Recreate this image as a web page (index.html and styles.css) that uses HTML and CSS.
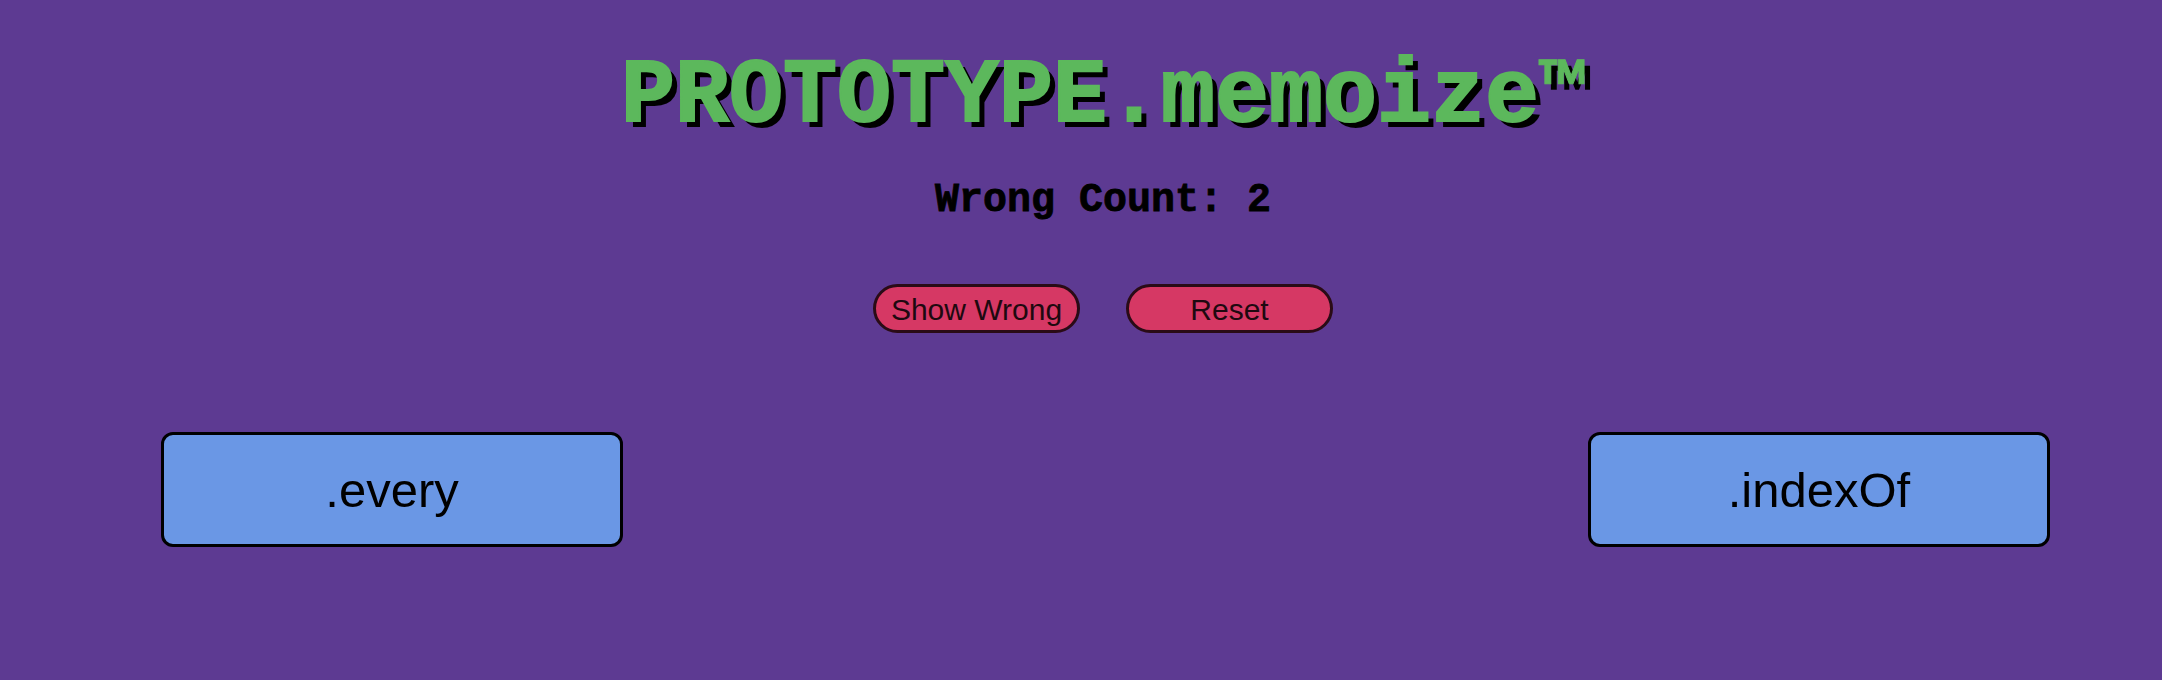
FILE: index.html
```html
<!DOCTYPE html>
<html lang="en">
<head>
<meta charset="utf-8">
<title>PROTOTYPE.memoize</title>
<link rel="stylesheet" href="styles.css">
</head>
<body>
<main class="page">
  <header class="head">
    <h1 class="title">PROTOTYPE.memoize<span class="tm">™</span></h1>
    <p class="count">Wrong Count: 2</p>
    <div class="controls">
      <button class="pill">Show Wrong</button>
      <button class="pill">Reset</button>
    </div>
  </header>
  <section class="cards">
    <div class="card">.every</div>
    <div class="card">.indexOf</div>
  </section>
</main>
</body>
</html>
```

FILE: styles.css
```css
html, body {
  margin: 0;
  padding: 0;
  background: #5d3a92;
  height: 100%;
}

.page {
  display: flex;
  flex-direction: column;
  padding-top: 43px;
}

.head {
  display: flex;
  flex-direction: column;
  align-items: center;
  padding-left: 44px;
}

.title {
  margin: 0;
  font-family: "Liberation Mono", "Courier New", monospace;
  font-weight: bold;
  font-size: 90px;
  line-height: 1.2;
  color: #5cb85c;
  -webkit-text-stroke: 2px #5cb85c;
  text-shadow: 6px 6px 0 #000;
  white-space: nowrap;
}

.tm {
  font-size: 0.85em;
  vertical-align: 0.08em;
  -webkit-text-stroke: 1px #5cb85c;
}

.count {
  margin: 26px 0 0;
  font-family: "Liberation Mono", "Courier New", monospace;
  font-weight: bold;
  font-size: 40px;
  line-height: 1.2;
  color: #000;
  -webkit-text-stroke: 0.8px #000;
}

.controls {
  display: flex;
  gap: 46px;
  margin-top: 59px;
}

.pill {
  box-sizing: border-box;
  width: 207px;
  height: 49px;
  padding: 2px 0 0;
  border: 3px solid #2a0b16;
  border-radius: 25px;
  background: #d63864;
  color: #1e0910;
  font-family: "Liberation Sans", Arial, sans-serif;
  font-size: 30px;
  line-height: 1;
  cursor: pointer;
}

.cards {
  display: flex;
  justify-content: space-between;
  padding: 0 112px 0 161px;
  margin-top: 99px;
}

.card {
  box-sizing: border-box;
  width: 462px;
  height: 115px;
  border: 3px solid #000;
  border-radius: 12px;
  background: #6a97e5;
  display: flex;
  align-items: center;
  justify-content: center;
  font-family: "Liberation Sans", Arial, sans-serif;
  font-size: 49px;
  color: #000;
}
```
